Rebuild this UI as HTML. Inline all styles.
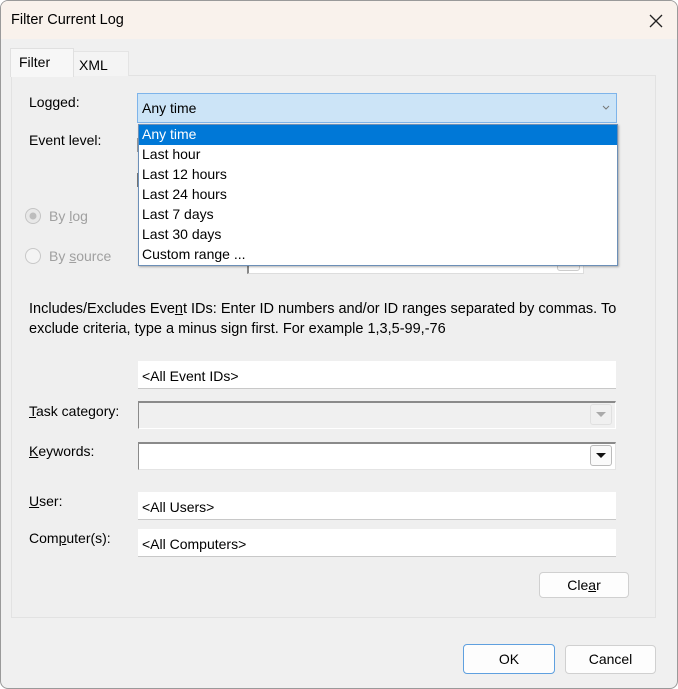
<!DOCTYPE html>
<html><head><style>
*{box-sizing:border-box;margin:0;padding:0}
body{width:678px;height:689px;background:#fff;font-family:"Liberation Sans",sans-serif;font-size:14px;color:#000;position:relative;overflow:hidden}
.win{position:absolute;left:0;top:0;width:678px;height:689px;background:#f0f0f0;border:1px solid #9a9a9a;border-radius:8px;overflow:hidden}
.title{position:absolute;left:0;top:0;width:678px;height:38px;background:#f9f2ec}
.a{position:absolute;white-space:nowrap}
.box{position:absolute;background:#fff;border-bottom:1px solid #c8c8c8}
.btn{position:absolute;background:#fdfdfd;border:1px solid #d0d0d0;border-radius:4px;text-align:center;line-height:25px}
</style></head><body>
<div class="win">
<div class="title"></div>
<div class="a" style="left:10px;top:11px;font-size:14.5px">Filter Current Log</div>
<svg class="a" style="left:648px;top:13px" width="14" height="14"><path d="M1 1L13 13M13 1L1 13" stroke="#222" stroke-width="1.3"/></svg>
<div class="a" style="left:10px;top:74px;width:645px;height:543px;border:1px solid #e2e2e2;background:#efefef"></div>
<div class="a" style="left:72px;top:50px;width:56px;height:25px;background:#f4f4f4;border:1px solid #e4e4e4;border-bottom:none"></div>
<div class="a" style="left:9px;top:47px;width:64px;height:29px;background:#f7f7f7;border:1px solid #e0e0e0;border-bottom:none"></div>
<div class="a" style="left:18px;top:53px">Filter</div>
<div class="a" style="left:78px;top:56px">XML</div>

<div class="a" style="left:28px;top:93px">Logged:</div>
<div class="a" style="left:136px;top:92px;width:480px;height:30px;background:#cce4f7;border:1px solid #7eb4ea"></div>
<div class="a" style="left:141px;top:99px">Any time</div>
<svg class="a" style="left:601px;top:104px" width="8" height="6"><path d="M1 1L4 4L7 1" stroke="#777" fill="none"/></svg>

<div class="a" style="left:28px;top:131px">Event level:</div>
<div class="a" style="left:136px;top:137px;width:3px;height:14px;background:#999"></div>
<div class="a" style="left:136px;top:172px;width:3px;height:14px;background:#777"></div>

<svg class="a" style="left:23px;top:206px" width="18" height="18"><circle cx="9" cy="9" r="7.5" fill="#e8e8e8" stroke="#c4c4c4"/><circle cx="9" cy="9" r="3.5" fill="#bdbdbd"/></svg>
<div class="a" style="left:48px;top:207px;color:#a0a0a0">By <u>l</u>og</div>
<svg class="a" style="left:23px;top:246px" width="18" height="18"><circle cx="9" cy="9" r="7.5" fill="#f4f4f4" stroke="#c8c8c8"/></svg>
<div class="a" style="left:48px;top:247px;color:#a0a0a0">By <u>s</u>ource</div>
<div class="a" style="left:246px;top:254px;width:337px;height:19px;background:#fff;border:1px solid #ddd;border-left:2px solid #888"></div>
<div class="a" style="left:556px;top:255px;width:23px;height:15px;border:1px solid #ccc;border-radius:3px;background:#f6f6f6"></div>

<div class="a" style="left:137px;top:123px;width:480px;height:142px;background:#fff;border:1px solid #6c8fb7;box-shadow:1px 1px 2px rgba(0,0,0,.3)"></div>
<div class="a" style="left:138px;top:124px;width:478px;height:20px;background:#0078d7"></div>
<div class="a" style="left:141px;top:125px;color:#fff">Any time</div>
<div class="a" style="left:141px;top:145px">Last hour</div>
<div class="a" style="left:141px;top:165px">Last 12 hours</div>
<div class="a" style="left:141px;top:185px">Last 24 hours</div>
<div class="a" style="left:141px;top:205px">Last 7 days</div>
<div class="a" style="left:141px;top:225px">Last 30 days</div>
<div class="a" style="left:141px;top:245px">Custom range ...</div>

<div class="a" style="left:28px;top:300px;font-size:14.5px">Includes/Excludes Eve<u>n</u>t IDs: Enter ID numbers and/or ID ranges separated by commas. To</div>
<div class="a" style="left:28px;top:320px;font-size:14.5px">exclude criteria, type a minus sign first. For example 1,3,5-99,-76</div>

<div class="box" style="left:137px;top:360px;width:478px;height:28px"></div>
<div class="a" style="left:141px;top:367px">&lt;All Event IDs&gt;</div>

<div class="a" style="left:28px;top:402px"><u>T</u>ask category:</div>
<div class="a" style="left:137px;top:400px;width:478px;height:28px;background:#f0f0f0;border:1px solid #fff;border-top:2px solid #8a8a8a;border-left:1px solid #8a8a8a"></div>
<div class="a" style="left:589px;top:403px;width:22px;height:21px;border:1px solid #e0e0e0;border-radius:3px"></div>
<svg class="a" style="left:595px;top:411px" width="10" height="6"><path d="M0 0H10L5 5Z" fill="#aaa"/></svg>

<div class="a" style="left:28px;top:442px"><u>K</u>eywords:</div>
<div class="a" style="left:137px;top:441px;width:478px;height:28px;background:#fff;border:1px solid #e4e4e4;border-top:2px solid #8a8a8a;border-left:1px solid #8a8a8a"></div>
<div class="a" style="left:589px;top:444px;width:22px;height:21px;border:1px solid #bbb;border-radius:3px;background:#fafafa"></div>
<svg class="a" style="left:595px;top:452px" width="10" height="6"><path d="M0 0H10L5 5Z" fill="#111"/></svg>

<div class="a" style="left:28px;top:492px"><u>U</u>ser:</div>
<div class="box" style="left:137px;top:491px;width:478px;height:28px"></div>
<div class="a" style="left:141px;top:498px">&lt;All Users&gt;</div>

<div class="a" style="left:28px;top:529px">Com<u>p</u>uter(s):</div>
<div class="box" style="left:137px;top:528px;width:478px;height:28px"></div>
<div class="a" style="left:141px;top:535px">&lt;All Computers&gt;</div>

<div class="btn" style="left:538px;top:571px;width:90px;height:26px">Cle<u>a</u>r</div>
<div class="btn" style="left:462px;top:643px;width:92px;height:30px;line-height:28px;border-color:#5fa0df;border-width:1.5px">OK</div>
<div class="btn" style="left:564px;top:644px;width:91px;height:29px;line-height:27px">Cancel</div>
</div>
</body></html>
